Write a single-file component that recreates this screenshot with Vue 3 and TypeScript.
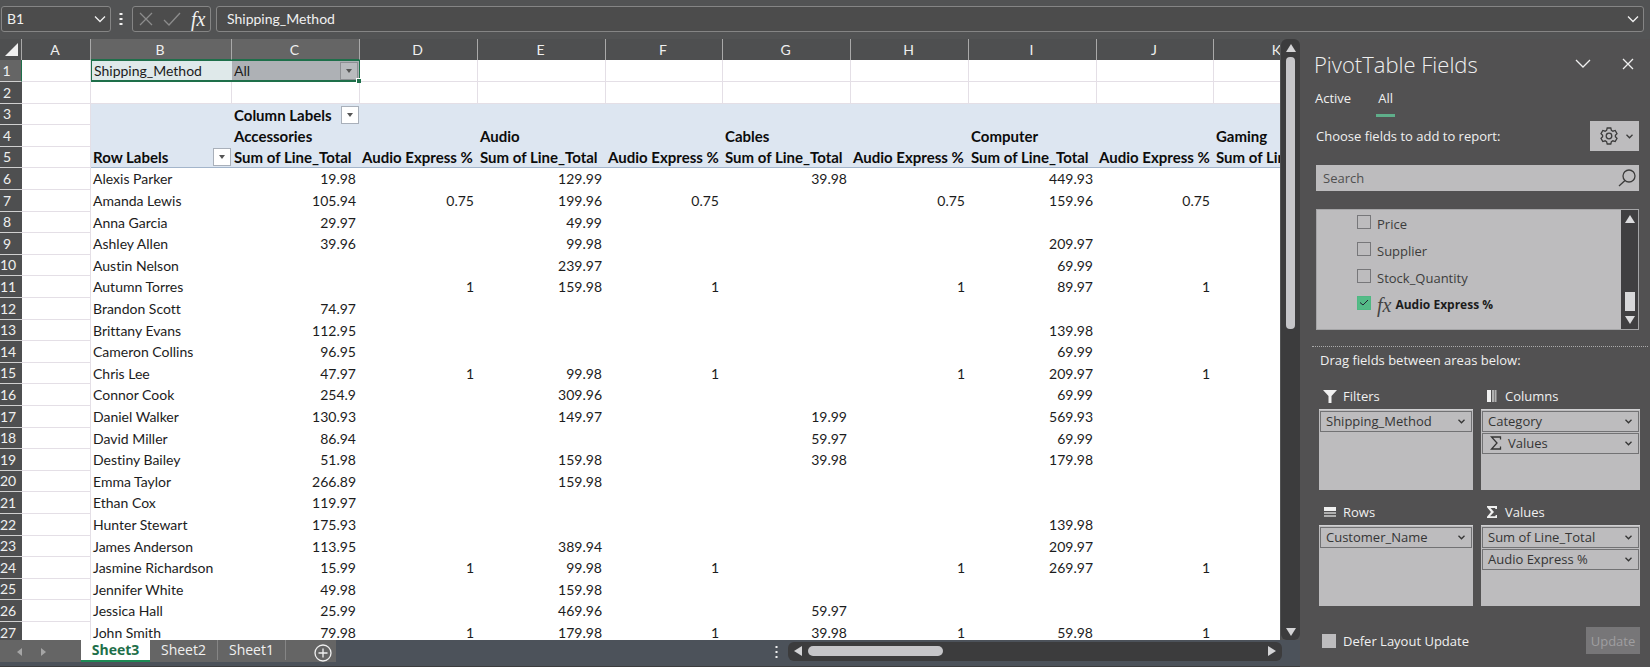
<script setup lang="ts">
import { computed, ref } from 'vue'

interface Column {
  letter: string
  kind: string
  category?: string
  measure?: string
}

const columns: Column[] = [
  { letter: 'A', kind: 'w-a' },
  { letter: 'B', kind: 'w-b' },
  { letter: 'C', kind: 'w-sum', category: 'Accessories', measure: 'Sum of Line_Total' },
  { letter: 'D', kind: 'w-pct', measure: 'Audio Express %' },
  { letter: 'E', kind: 'w-sum', category: 'Audio', measure: 'Sum of Line_Total' },
  { letter: 'F', kind: 'w-pct-narrow', measure: 'Audio Express %' },
  { letter: 'G', kind: 'w-sum', category: 'Cables', measure: 'Sum of Line_Total' },
  { letter: 'H', kind: 'w-pct', measure: 'Audio Express %' },
  { letter: 'I', kind: 'w-sum', category: 'Computer', measure: 'Sum of Line_Total' },
  { letter: 'J', kind: 'w-pct-narrow', measure: 'Audio Express %' },
  { letter: 'K', kind: 'w-sum', category: 'Gaming', measure: 'Sum of Line_Total' },
]
const pivotColumns = columns.slice(2)

interface Customer {
  name: string
  accessories?: string
  audio?: string
  cables?: string
  computer?: string
  ratio?: string
}

const customers: Customer[] = [
  { name: 'Alexis Parker', accessories: '19.98', audio: '129.99', cables: '39.98', computer: '449.93' },
  { name: 'Amanda Lewis', accessories: '105.94', audio: '199.96', computer: '159.96', ratio: '0.75' },
  { name: 'Anna Garcia', accessories: '29.97', audio: '49.99' },
  { name: 'Ashley Allen', accessories: '39.96', audio: '99.98', computer: '209.97' },
  { name: 'Austin Nelson', audio: '239.97', computer: '69.99' },
  { name: 'Autumn Torres', audio: '159.98', computer: '89.97', ratio: '1' },
  { name: 'Brandon Scott', accessories: '74.97' },
  { name: 'Brittany Evans', accessories: '112.95', computer: '139.98' },
  { name: 'Cameron Collins', accessories: '96.95', computer: '69.99' },
  { name: 'Chris Lee', accessories: '47.97', audio: '99.98', computer: '209.97', ratio: '1' },
  { name: 'Connor Cook', accessories: '254.9', audio: '309.96', computer: '69.99' },
  { name: 'Daniel Walker', accessories: '130.93', audio: '149.97', cables: '19.99', computer: '569.93' },
  { name: 'David Miller', accessories: '86.94', cables: '59.97', computer: '69.99' },
  { name: 'Destiny Bailey', accessories: '51.98', audio: '159.98', cables: '39.98', computer: '179.98' },
  { name: 'Emma Taylor', accessories: '266.89', audio: '159.98' },
  { name: 'Ethan Cox', accessories: '119.97' },
  { name: 'Hunter Stewart', accessories: '175.93', computer: '139.98' },
  { name: 'James Anderson', accessories: '113.95', audio: '389.94', computer: '209.97' },
  { name: 'Jasmine Richardson', accessories: '15.99', audio: '99.98', computer: '269.97', ratio: '1' },
  { name: 'Jennifer White', accessories: '49.98', audio: '159.98' },
  { name: 'Jessica Hall', accessories: '25.99', audio: '469.96', cables: '59.97' },
  { name: 'John Smith', accessories: '79.98', audio: '179.98', cables: '39.98', computer: '59.98', ratio: '1' },
]

const dataRows = computed(() =>
  customers.map((c, i) => ({
    number: i + 6,
    name: c.name,
    cells: [c.accessories, c.ratio, c.audio, c.ratio, c.cables, c.ratio, c.computer, c.ratio, ''],
  })),
)

const nameBox = ref('B1')
const formula = ref('Shipping_Method')
const search = ref('')
const defer = ref(false)
const activeSheet = ref('Sheet3')
const sheets = ['Sheet3', 'Sheet2', 'Sheet1']

const fields = ref([
  { name: 'Price', checked: false, calculated: false },
  { name: 'Supplier', checked: false, calculated: false },
  { name: 'Stock_Quantity', checked: false, calculated: false },
  { name: 'Audio Express %', checked: true, calculated: true },
])

const areas = [
  { title: 'Filters', icon: 'filter', items: [{ name: 'Shipping_Method', sigma: false }] },
  { title: 'Columns', icon: 'columns', items: [{ name: 'Category', sigma: false }, { name: 'Values', sigma: true }] },
  { title: 'Rows', icon: 'rows', items: [{ name: 'Customer_Name', sigma: false }] },
  { title: 'Values', icon: 'sigma', items: [{ name: 'Sum of Line_Total', sigma: false }, { name: 'Audio Express %', sigma: false }] },
]
</script>

<template>
  <div class="app">
    <header class="formula-bar">
      <div class="box name-box">
        <input v-model="nameBox" aria-label="Name box" />
        <button type="button" aria-label="Show names">
          <svg width="12" height="8" viewBox="0 0 12 8"><path d="M1 1.5l5 5 5-5" /></svg>
        </button>
      </div>
      <svg class="grip" width="4" height="14" viewBox="0 0 4 14"><path d="M.5 1h3v2h-3zM.5 6h3v2h-3zM.5 11h3v2h-3z" /></svg>
      <div class="box actions">
        <button type="button" aria-label="Cancel" class="dim">
          <svg width="14" height="14" viewBox="0 0 14 14"><path d="M1 1l12 12M13 1L1 13" /></svg>
        </button>
        <button type="button" aria-label="Enter" class="dim">
          <svg width="18" height="14" viewBox="0 0 18 14"><path d="M1 8l5 5L17 1" /></svg>
        </button>
        <button type="button" aria-label="Insert function" class="fx">fx</button>
      </div>
      <div class="box formula">
        <input v-model="formula" aria-label="Formula" />
        <button type="button" aria-label="Expand formula bar">
          <svg width="12" height="8" viewBox="0 0 12 8"><path d="M1 1.5l5 5 5-5" /></svg>
        </button>
      </div>
    </header>

    <div class="body">
      <main class="workbook">
        <div class="view">
          <div class="sheet">
            <table>
              <colgroup>
                <col class="w-head" />
                <col v-for="c in columns" :key="c.letter" :class="c.kind" />
              </colgroup>
              <thead>
                <tr>
                  <th class="corner"><svg width="13" height="13" viewBox="0 0 13 13"><path d="M13 0v13H0z" /></svg></th>
                  <th v-for="c in columns" :key="c.letter" scope="col" :class="{ picked: c.letter === 'B' || c.letter === 'C' }">{{ c.letter }}</th>
                </tr>
              </thead>
              <tbody>
                <tr>
                  <th scope="row" class="picked">1</th>
                  <td class="lined"></td>
                  <td class="sel sel-b">Shipping_Method</td>
                  <td class="sel sel-c">
                    <div class="with-button">
                      <span>All</span>
                      <button type="button" class="drop grey" aria-label="Filter Shipping_Method"><svg width="6" height="4" viewBox="0 0 6 4"><path d="M0 0h6L3 4z" /></svg></button>
                    </div>
                    <i class="handle"></i>
                  </td>
                  <td v-for="c in columns.slice(3)" :key="c.letter" class="lined"></td>
                </tr>
                <tr>
                  <th scope="row">2</th>
                  <td v-for="c in columns" :key="c.letter" class="lined"></td>
                </tr>
                <tr class="pivot-head">
                  <th scope="row">3</th>
                  <td class="lined"></td>
                  <td></td>
                  <td>
                    <div class="with-button">
                      <span>Column Labels</span>
                      <button type="button" class="drop" aria-label="Filter columns"><svg width="6" height="4" viewBox="0 0 6 4"><path d="M0 0h6L3 4z" /></svg></button>
                    </div>
                  </td>
                  <td v-for="c in columns.slice(3)" :key="c.letter"></td>
                </tr>
                <tr class="pivot-head">
                  <th scope="row">4</th>
                  <td class="lined"></td>
                  <td></td>
                  <td v-for="c in pivotColumns" :key="c.letter">{{ c.category }}</td>
                </tr>
                <tr class="pivot-head last">
                  <th scope="row">5</th>
                  <td class="lined"></td>
                  <td>
                    <div class="with-button">
                      <span>Row Labels</span>
                      <button type="button" class="drop" aria-label="Filter rows"><svg width="6" height="4" viewBox="0 0 6 4"><path d="M0 0h6L3 4z" /></svg></button>
                    </div>
                  </td>
                  <td v-for="c in pivotColumns" :key="c.letter">{{ c.measure }}</td>
                </tr>
                <tr v-for="r in dataRows" :key="r.number">
                  <th scope="row">{{ r.number }}</th>
                  <td class="lined"></td>
                  <td>{{ r.name }}</td>
                  <td v-for="(v, i) in r.cells" :key="i" class="num">{{ v }}</td>
                </tr>
              </tbody>
            </table>
          </div>
          <div class="vscroll">
            <svg width="10" height="8" viewBox="0 0 10 8"><path d="M5 0l5 8H0z" /></svg>
            <div class="thumb"></div>
            <svg width="10" height="8" viewBox="0 0 10 8"><path d="M0 0h10L5 8z" /></svg>
          </div>
        </div>

        <footer class="tab-bar">
          <div class="tabs">
            <button type="button" class="nav" aria-label="Previous sheet"><svg width="5" height="8" viewBox="0 0 5 8"><path d="M5 0v8L0 4z" /></svg></button>
            <button type="button" class="nav" aria-label="Next sheet"><svg width="5" height="8" viewBox="0 0 5 8"><path d="M0 0v8l5-4z" /></svg></button>
            <button
              v-for="s in sheets"
              :key="s"
              type="button"
              class="tab"
              :class="{ active: s === activeSheet }"
              @click="activeSheet = s"
            >{{ s }}</button>
            <button type="button" class="add" aria-label="New sheet">
              <svg width="18" height="18" viewBox="0 0 18 18"><circle cx="9" cy="9" r="8" /><path d="M9 4.500v9M4.500 9h9" /></svg>
            </button>
          </div>
          <svg class="grip" width="3" height="12" viewBox="0 0 3 12"><path d="M.5 0h2v2h-2zM.5 5h2v2h-2zM.5 10h2v2h-2z" /></svg>
          <div class="hscroll">
            <svg width="8" height="10" viewBox="0 0 8 10"><path d="M8 0v10L0 5z" /></svg>
            <div class="thumb"></div>
            <svg width="8" height="10" viewBox="0 0 8 10"><path d="M0 0v10l8-5z" /></svg>
          </div>
        </footer>
      </main>

      <aside class="pane">
        <div class="title-row">
          <h1>PivotTable Fields</h1>
          <button type="button" aria-label="Pane options"><svg width="16" height="10" viewBox="0 0 16 10"><path d="M1 1l7 7 7-7" /></svg></button>
          <button type="button" aria-label="Close pane"><svg width="12" height="12" viewBox="0 0 12 12"><path d="M1 1l10 10M11 1L1 11" /></svg></button>
        </div>
        <div class="pane-tabs">
          <button type="button">Active</button>
          <button type="button" class="current">All</button>
        </div>
        <div class="choose">
          <span>Choose fields to add to report:</span>
          <button type="button" aria-label="Tools">
            <svg width="18" height="18" viewBox="0 0 18 18"><path d="M7.200 1h3.600l.6 2.300 1.500.9 2.300-.7L17 6.600 15.400 8.300v1.500L17 11.400l-1.800 3.100-2.300-.7-1.500.9-.6 2.300H7.200l-.6-2.300-1.500-.9-2.300.7L1 11.400l1.600-1.600V8.300L1 6.600l1.800-3.100 2.300.7 1.500-.9z" /><circle cx="9" cy="9" r="2.800" /></svg>
            <svg width="7" height="5" viewBox="0 0 7 5"><path d="M.5.8l3 3 3-3" /></svg>
          </button>
        </div>
        <div class="search">
          <input v-model="search" type="text" placeholder="Search" aria-label="Search fields" />
          <button type="button" aria-label="Search"><svg width="18" height="18" viewBox="0 0 18 18"><circle cx="11" cy="7" r="6" /><path d="M7 11.500L1 17" /></svg></button>
        </div>
        <div class="field-list">
          <div class="fields">
            <label v-for="f in fields" :key="f.name" :class="{ calculated: f.calculated }">
              <input v-model="f.checked" type="checkbox" />
              <span v-if="f.calculated" class="fx">fx</span>
              <span>{{ f.name }}</span>
            </label>
          </div>
          <div class="list-scroll">
            <svg width="10" height="8" viewBox="0 0 10 8"><path d="M5 0l5 8H0z" /></svg>
            <div class="thumb"></div>
            <svg width="10" height="8" viewBox="0 0 10 8"><path d="M0 0h10L5 8z" /></svg>
          </div>
        </div>
        <hr />
        <p class="drag">Drag fields between areas below:</p>
        <div class="areas">
          <section v-for="a in areas" :key="a.title">
            <h2>
              <svg v-if="a.icon === 'filter'" width="14" height="14" viewBox="0 0 14 14"><path d="M0 1h14L8.500 7v7h-3V7z" /></svg>
              <svg v-else-if="a.icon === 'columns'" width="14" height="14" viewBox="0 0 14 14"><path d="M2 1h4v12H2z" /><path class="soft" d="M7 1h2v12H7zM9.500 1h2v12h-2z" /></svg>
              <svg v-else-if="a.icon === 'rows'" width="14" height="14" viewBox="0 0 14 14"><path d="M1 2h12v4H1z" /><path class="soft" d="M1 7h12v2H1zM1 10h12v2H1z" /></svg>
              <svg v-else width="14" height="14" viewBox="0 0 14 14"><path d="M2 1h10v3h-1.500L10 3H5.500L9 7l-4 4.300h5.200l.6-1.300H12v3H2v-1.300L6 7 2 2.300z" /></svg>
              <span>{{ a.title }}</span>
            </h2>
            <div class="well">
              <button v-for="item in a.items" :key="item.name" type="button">
                <svg v-if="item.sigma" class="sigma" width="12" height="14" viewBox="0 0 12 14"><path d="M10.500 3.500V1H1.500L7 7l-5.500 6h9v-2.500" /></svg>
                <span>{{ item.name }}</span>
                <svg class="caret" width="7" height="5" viewBox="0 0 7 5"><path d="M.5.8l3 3 3-3" /></svg>
              </button>
            </div>
          </section>
        </div>
        <div class="bottom">
          <label><input v-model="defer" type="checkbox" />Defer Layout Update</label>
          <button type="button" disabled>Update</button>
        </div>
      </aside>
    </div>
  </div>
</template>

<style>
body {
  margin: 0;
  background: #505152;
}
</style>

<style scoped>
.app {
  display: flex;
  flex-direction: column;
  height: 100vh;
  overflow: hidden;
  background: #525354;
  color: #f0f0f0;
  font: 13px/18px "Open Sans", "Noto Sans", sans-serif;
}
* {
  box-sizing: border-box;
}
button,
input {
  font: inherit;
  color: inherit;
  background: none;
  border: 0;
  padding: 0;
  margin: 0;
  border-radius: 0;
}
svg {
  display: block;
  flex: none;
  fill: none;
  stroke: currentColor;
  stroke-width: 1.3;
}

/* formula bar */
.formula-bar {
  display: flex;
  align-items: center;
  flex: none;
  padding: 6px 6px 7px 1px;
}
.box {
  display: flex;
  align-items: center;
  height: 26px;
  border: 1px solid #858585;
  border-radius: 3px;
  background: #4c4c4c;
}
.box input {
  flex: 1;
  min-width: 0;
  outline: 0;
  font: 14px/20px Lato, sans-serif;
}
.name-box {
  width: 110px;
  padding: 0 4px 0 5px;
}
.formula-bar .grip {
  margin: 0 9px 0 8px;
}
.grip,
.corner svg,
.vscroll svg,
.hscroll svg,
.nav svg,
.drop svg,
.list-scroll svg {
  fill: currentColor;
  stroke: none;
}
.actions {
  width: 79px;
  gap: 10px;
  padding: 0 5px 0 6px;
  margin-right: 5px;
}
.dim {
  color: #8c8c8c;
}
.fx {
  font: italic 20px/20px "Liberation Serif", serif;
}
.formula {
  flex: 1;
  padding: 0 4px 0 10px;
}

/* workbook */
.body {
  display: flex;
  flex: 1;
  min-height: 0;
}
.workbook {
  display: flex;
  flex-direction: column;
  flex: 1;
  min-width: 0;
}
.view {
  display: flex;
  flex: 1;
  min-height: 0;
}
.sheet {
  flex: 1;
  min-width: 0;
  overflow: hidden;
  background: #fff;
  color: #1c1c1c;
  font: 14px/20px Lato, "Liberation Sans", sans-serif;
  font-variant-ligatures: none;
}
table {
  table-layout: fixed;
  width: 1342px;
  border-collapse: separate;
  border-spacing: 0;
}
.w-head { width: 22px; }
.w-a { width: 69px; }
.w-b { width: 141px; }
.w-sum { width: 128px; }
.w-pct { width: 118px; }
.w-pct-narrow { width: 117px; }
th,
td {
  padding: 0 4px 0 2px;
  white-space: nowrap;
}
th {
  background: #4e4f50;
  color: #efefef;
  font-weight: 400;
}
thead th {
  height: 21px;
  line-height: 19px;
  border-right: 1px solid #a9a9a9;
}
thead .picked {
  background: #656565;
  border-bottom: 1px solid #1e6f4a;
}
.corner svg {
  margin-left: 3px;
}
tbody tr {
  height: 22px;
}
tbody tr:nth-child(5n + 3),
tbody tr:nth-child(5n) {
  height: 21px;
}
tbody td,
tbody th {
  line-height: 18px;
}
tbody th {
  padding: 0 8px 0 0;
  border-bottom: 1px solid #d0d0d0;
}
tbody th.picked {
  background: #656565;
  border-right: 1px solid #1e6f4a;
}
.lined {
  border-right: 1px solid #e4dfe6;
  border-bottom: 1px solid #e4dfe6;
}
.num {
  text-align: right;
}
.pivot-head td:not(.lined) {
  background: #dde6f1;
  color: #0c0c0c;
  font-size: 15px;
  font-weight: 700;
}
.last td:not(.lined) {
  border-bottom: 1px solid #a3b5cb;
}
.sel {
  border-top: 1px solid #1e6f4a;
  border-bottom: 2px solid #1e6f4a;
}
.sel-b {
  background: #dfe9ea;
  border-left: 1px solid #1e6f4a;
}
.sel-c {
  position: relative;
  background: #aeb1b5;
  border-right: 1px solid #1e6f4a;
}
.handle {
  position: absolute;
  right: -2px;
  bottom: -3px;
  width: 5px;
  height: 5px;
  background: #1e6f4a;
  border: 1px solid #fff;
  border-width: 1px 0 0 1px;
}
.with-button {
  display: flex;
  align-items: center;
  justify-content: space-between;
  height: 18px;
  margin-right: -3px;
}
.drop {
  display: flex;
  align-items: center;
  justify-content: center;
  width: 18px;
  height: 18px;
  border: 1px solid #a9b0ba;
  background: #fff;
  color: #555;
}
.drop.grey {
  background: #b9bbbe;
  border-color: #8e9094;
}
.vscroll {
  display: flex;
  flex-direction: column;
  align-items: center;
  flex: none;
  gap: 5px;
  width: 19px;
  margin-left: 1px;
  padding: 5px 0 4px;
  border-radius: 6px;
  background: #3c3c3d;
  color: #d4d4d6;
}
.vscroll .thumb {
  width: 9px;
  height: 272px;
  border-radius: 4px;
  background: #c6c6c9;
}
.vscroll svg:last-child,
.hscroll svg:last-child {
  margin: auto 0 0;
}

/* sheet tabs */
.tab-bar {
  display: flex;
  align-items: center;
  flex: none;
  height: 27px;
  padding-bottom: 4px;
  background: #4c525a;
  border-bottom: 1px solid #3c3c3d;
}
.tabs {
  display: flex;
  align-items: flex-start;
  height: 22px;
  width: 336px;
  padding-left: 16px;
  background: #656565;
}
.nav {
  width: 24px;
  height: 24px;
  padding-left: 1px;
  color: #a5a5a5;
}
.tab {
  width: 68px;
  height: 20px;
  border-right: 1px solid #858585;
  font-size: 14px;
  line-height: 18px;
}
.tab.active {
  width: 69px;
  height: 22px;
  margin-left: 17px;
  background: #fff;
  color: #1e6f4a;
  font-weight: 700;
  border-right: 0;
  border-bottom: 2px solid #1e8a55;
}
.add {
  margin: 4px 0 0 28px;
}
.tab-bar > .grip {
  margin: 2px 10px 0 auto;
}
.hscroll {
  display: flex;
  align-items: center;
  flex: none;
  gap: 6px;
  width: 38%;
  height: 19px;
  margin-right: 18px;
  padding: 0 6px;
  border-radius: 6px;
  background: #3c3c3d;
  color: #d4d4d6;
}
.hscroll .thumb {
  width: 135px;
  height: 10px;
  border-radius: 5px;
  background: #c6c6c9;
}
.hscroll svg:last-child {
  margin: 0 0 0 auto;
}

/* fields pane */
.pane {
  flex: none;
  width: 350px;
  padding: 8px 10px 12px 14px;
  background: #525152;
}
.title-row {
  display: flex;
  align-items: center;
  gap: 31px;
  height: 34px;
  padding-right: 6px;
}
h1 {
  flex: 1;
  margin: 0;
  font-size: 22px;
  line-height: 30px;
  font-weight: 300;
}
.pane-tabs {
  display: flex;
  gap: 25px;
  padding: 8px 1px 0;
}
.pane-tabs button {
  height: 28px;
  padding-bottom: 10px;
}
.pane-tabs .current {
  padding: 0 2px 7px;
  border-bottom: 3px solid #5fae8a;
}
.choose {
  display: flex;
  align-items: center;
  justify-content: space-between;
  margin: 4px 1px 14px 2px;
}
.choose button {
  display: flex;
  align-items: center;
  gap: 8px;
  width: 49px;
  height: 30px;
  padding-left: 10px;
  background: #bdbcbe;
  color: #3c3c3c;
}
.search {
  display: flex;
  align-items: center;
  height: 26px;
  margin: 0 1px 18px 2px;
  padding: 0 3px 0 7px;
  background: #bdbcbe;
  color: #3c3c3c;
}
.search input {
  flex: 1;
  min-width: 0;
  outline: 0;
}
.search input::placeholder {
  color: #505050;
  opacity: 1;
}
.field-list {
  display: flex;
  height: 121px;
  margin: 0 1px 0 2px;
  border: 1px solid #a5a5a7;
  background: #bdbcbe;
  color: #3c3c3c;
}
.fields {
  flex: 1;
  padding-left: 40px;
}
.fields label {
  display: flex;
  align-items: center;
  height: 27px;
  gap: 6px;
}
.calculated {
  color: #1c1c1c;
  font-size: 12px;
  font-weight: 700;
}
.calculated .fx {
  margin-right: -2px;
  color: #444;
}
input[type="checkbox"] {
  appearance: none;
  width: 14px;
  height: 14px;
  border: 1px solid #77777a;
}
.fields input {
  margin-bottom: 4px;
}
.fields input:checked {
  border-color: #4fb883;
  background: #54bb87 url("data:image/svg+xml,%3Csvg xmlns='http://www.w3.org/2000/svg' viewBox='0 0 12 12' fill='none' stroke='%23223' %3E%3Cpath d='M2 5.500l3 2.500 5-5'/%3E%3C/svg%3E");
}
.list-scroll {
  display: flex;
  flex-direction: column;
  align-items: center;
  justify-content: space-between;
  width: 17px;
  padding: 5px 0;
  background: #403f41;
  color: #dcdcde;
}
.list-scroll .thumb {
  width: 10px;
  height: 19px;
  margin: auto 0 5px;
  background: #d8d8da;
}
hr {
  margin: 16px -8px 0 -2px;
  border: 0;
  border-top: 1px dotted #aaa;
}
.drag {
  margin: 4px 6px 17px;
}
.areas {
  display: grid;
  grid-template-columns: 154fr 159fr;
  gap: 12px 8px;
  padding-left: 5px;
}
h2 {
  display: flex;
  align-items: center;
  gap: 6px;
  margin: 0 0 3px;
  padding-left: 4px;
  font-size: 13px;
  line-height: 20px;
  font-weight: 400;
}
h2 svg {
  fill: currentColor;
  stroke: none;
}
.soft {
  opacity: 0.6;
}
.well {
  height: 81px;
  padding: 1px;
  background: #bdbcbe;
  border-top: 1px solid #d0d0d2;
}
.well button {
  display: flex;
  align-items: center;
  width: 100%;
  height: 21px;
  margin-bottom: 1px;
  padding: 0 6px 1px 5px;
  border: 1px solid #727274;
  color: #353535;
}
.sigma {
  margin: 0 6px 0 2px;
}
.caret {
  margin-left: auto;
}
.bottom {
  display: flex;
  align-items: center;
  justify-content: space-between;
  margin-top: 21px;
  padding-left: 8px;
}
.bottom label {
  display: flex;
  align-items: center;
  gap: 7px;
}
.bottom input {
  background: #bdbcbe;
  border-color: #bdbcbe;
}
.bottom button {
  width: 54px;
  height: 27px;
  background: #777678;
  color: #9f9ea0;
}
</style>
